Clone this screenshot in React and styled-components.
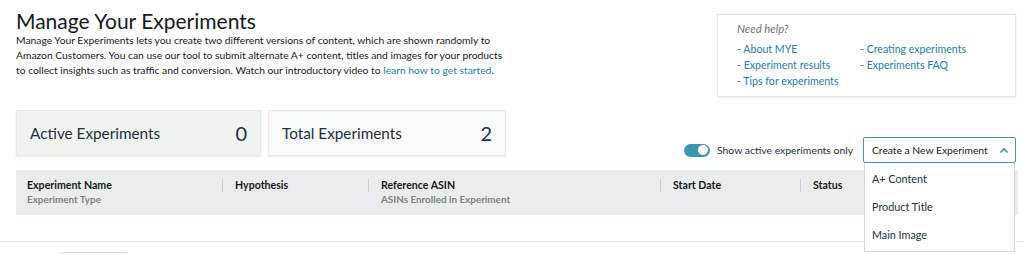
import styled, { createGlobalStyle } from "styled-components";

const GlobalStyle = createGlobalStyle`
  body {
    margin: 0;
    background: #ffffff;
    font-family: Lato, "Noto Sans", Arial, sans-serif;
    color: #333;
  }
`;

const Page = styled.div`
  width: 1024px;
  height: 254px;
  overflow: hidden;
  position: relative;
`;

const Inner = styled.div`
  padding: 8px 8px 0 16px;
`;

const TopRow = styled.div`
  display: flex;
  justify-content: space-between;
  align-items: flex-start;
`;

const Intro = styled.div`
  width: 540px;
`;

const Title = styled.h1`
  margin: 0;
  font-size: 21px;
  font-weight: 400;
  color: #16191f;
  line-height: 25px;
`;

const Desc = styled.p`
  margin: 0;
  font-size: 10.3px;
  line-height: 15px;
  color: #16191f;
  white-space: nowrap;
`;

const Link = styled.a`
  color: #2a7d9c;
  text-decoration: none;
`;

const HelpBox = styled.div`
  margin-top: 6px;
  width: 299px;
  height: 83px;
  box-sizing: border-box;
  border: 1px solid #e4e7e7;
  box-shadow: 0 1px 3px rgba(0, 0, 0, 0.08);
  padding: 7px 19px 0 19px;
`;

const HelpTitle = styled.div`
  font-size: 11.3px;
  font-style: italic;
  color: #6f7373;
  margin-bottom: 8px;
`;

const HelpLinks = styled.div`
  display: grid;
  grid-template-columns: 123px 1fr;
  grid-auto-flow: column;
  grid-template-rows: repeat(3, 16px);
  font-size: 10.6px;
`;

const ControlRow = styled.div`
  display: flex;
  justify-content: space-between;
  align-items: flex-end;
  margin-top: 13px;
`;

const Stats = styled.div`
  display: flex;
  gap: 7px;
  margin-bottom: 7px;
`;

const StatCard = styled.div`
  width: ${(p) => p.w}px;
  height: 46px;
  box-sizing: border-box;
  background: ${(p) => (p.active ? "#f0f4f1" : "#f8f9f9")};
  border: 1px solid #e6e9e8;
  box-shadow: 0 1px 2px rgba(0, 0, 0, 0.08);
  display: flex;
  align-items: center;
  justify-content: space-between;
  padding: 0 13px 0 13px;
`;

const StatLabel = styled.span`
  font-size: 15.3px;
  color: #232f3e;
`;

const StatValue = styled.span`
  font-size: 20px;
  color: #232f3e;
`;

const Controls = styled.div`
  display: flex;
  align-items: center;
  gap: 10px;
`;

const Toggle = styled.div`
  width: 26px;
  height: 13px;
  border-radius: 7px;
  background: #3c97ae;
  position: relative;
  &::after {
    content: "";
    position: absolute;
    right: 2px;
    top: 1.5px;
    width: 10px;
    height: 10px;
    border-radius: 50%;
    background: #fff;
  }
`;

const ToggleLabel = styled.span`
  font-size: 10.4px;
  color: #232f3e;
  margin-left: -3px;
  white-space: nowrap;
`;

const DropWrap = styled.div`
  position: relative;
`;

const DropButton = styled.div`
  width: 153px;
  height: 26px;
  box-sizing: border-box;
  border: 1px solid #4d8fa3;
  border-radius: 2px;
  display: flex;
  align-items: center;
  justify-content: space-between;
  padding: 0 6px 0 8px;
  font-size: 10.3px;
  color: #16191f;
  background: #fff;
  white-space: nowrap;
`;

const Menu = styled.div`
  position: absolute;
  top: 26px;
  left: 1px;
  width: 151px;
  box-sizing: border-box;
  border: 1px solid #d5d9d9;
  border-top: none;
  background: #fff;
  z-index: 2;
  padding: 2px 0 2px;
`;

const MenuItem = styled.div`
  height: 28px;
  line-height: 28px;
  padding-left: 7px;
  font-size: 10.8px;
  color: #232f3e;
`;

const TableHead = styled.div`
  margin-top: 7px;
  margin-right: -2px;
  height: 45px;
  background: #e9edee;
  display: grid;
  grid-template-columns: 206px 146px 292px 140px 1fr;
  padding-top: 8px;
  box-sizing: border-box;
`;

const Cell = styled.div`
  display: flex;
  align-items: flex-start;
  padding-left: ${(p) => (p.first ? 11 : 0)}px;
`;

const Sep = styled.span`
  width: 1px;
  height: 13px;
  margin-top: 1px;
  background: #c9cdcd;
  margin-right: 12px;
`;

const ColText = styled.div`
  display: flex;
  flex-direction: column;
`;

const ColTitle = styled.span`
  font-size: 10.6px;
  font-weight: 700;
  color: #16191f;
  line-height: 15px;
`;

const ColSub = styled.span`
  font-size: 9.9px;
  font-weight: 700;
  color: #7b8383;
  line-height: 13px;
`;

const Divider = styled.div`
  margin-top: 26px;
  border-top: 1px solid #e3e6e6;
`;

const Footer = styled.div`
  padding: 10px 0 0 60px;
`;

const FooterButton = styled.div`
  width: 66px;
  height: 20px;
  border: 1px solid #d5d9d9;
  border-radius: 3px;
`;

const columns = [
  { title: "Experiment Name", sub: "Experiment Type" },
  { title: "Hypothesis" },
  { title: "Reference ASIN", sub: "ASINs Enrolled in Experiment" },
  { title: "Start Date" },
  { title: "Status" },
];

const Chevron = () => (
  <svg width="10" height="7" viewBox="0 0 10 7">
    <path d="M1.5 5.5 L5 2 L8.5 5.5" fill="none" stroke="#3f8aa0" strokeWidth="1.6" />
  </svg>
);

export default function App() {
  return (
    <Page>
      <GlobalStyle />
      <Inner>
        <TopRow>
          <Intro>
            <Title>Manage Your Experiments</Title>
            <Desc>
              Manage Your Experiments lets you create two different versions of content, which are shown randomly to
              <br />
              Amazon Customers. You can use our tool to submit alternate A+ content, titles and images for your products
              <br />
              to collect insights such as traffic and conversion. Watch our introductory video to{" "}
              <Link>learn how to get started</Link>.
            </Desc>
          </Intro>
          <HelpBox>
            <HelpTitle>Need help?</HelpTitle>
            <HelpLinks>
              <Link>- About MYE</Link>
              <Link>- Experiment results</Link>
              <Link>- Tips for experiments</Link>
              <Link>- Creating experiments</Link>
              <Link>- Experiments FAQ</Link>
            </HelpLinks>
          </HelpBox>
        </TopRow>

        <ControlRow>
          <Stats>
            <StatCard w={245} active>
              <StatLabel>Active Experiments</StatLabel>
              <StatValue>0</StatValue>
            </StatCard>
            <StatCard w={238}>
              <StatLabel>Total Experiments</StatLabel>
              <StatValue>2</StatValue>
            </StatCard>
          </Stats>
          <Controls>
            <Toggle />
            <ToggleLabel>Show active experiments only</ToggleLabel>
            <DropWrap>
              <DropButton>
                Create a New Experiment
                <Chevron />
              </DropButton>
              <Menu>
                <MenuItem>A+ Content</MenuItem>
                <MenuItem>Product Title</MenuItem>
                <MenuItem>Main Image</MenuItem>
              </Menu>
            </DropWrap>
          </Controls>
        </ControlRow>

        <TableHead>
          {columns.map((c, i) => (
            <Cell key={c.title} first={i === 0}>
              {i > 0 && <Sep />}
              <ColText>
                <ColTitle>{c.title}</ColTitle>
                {c.sub && <ColSub>{c.sub}</ColSub>}
              </ColText>
            </Cell>
          ))}
        </TableHead>
      </Inner>
      <Divider />
      <Footer>
        <FooterButton />
      </Footer>
    </Page>
  );
}
